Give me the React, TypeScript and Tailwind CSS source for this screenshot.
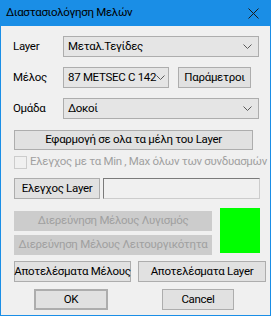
import { ReactNode } from 'react';

const font = { fontFamily: '"Segoe UI", Roboto, "Liberation Sans", sans-serif' };

function Chevron() {
  return (
    <svg width="9" height="5" viewBox="0 0 9 5" className="shrink-0">
      <path d="M0.5 0.5 L4.5 4.5 L8.5 0.5" fill="none" stroke="#5a5a5a" strokeWidth="1" />
    </svg>
  );
}

function Combo({ value, className }: { value: string; className: string }) {
  return (
    <div
      className={`flex h-[21px] items-center justify-between border border-[#adadad] bg-[#e5e5e5] pl-[4px] pr-[6px] text-black ${className}`}
    >
      <span className="whitespace-nowrap">{value}</span>
      <Chevron />
    </div>
  );
}

function Btn({
  children,
  className,
  disabled,
}: {
  children: ReactNode;
  className: string;
  disabled?: boolean;
}) {
  return (
    <div
      className={`flex shrink-0 items-center justify-center whitespace-nowrap border ${
        disabled
          ? 'border-[#cccccc] bg-[#cccccc] text-[#a0a0a0]'
          : 'border-[#adadad] bg-[#e1e1e1] text-black'
      } ${className}`}
    >
      {children}
    </div>
  );
}

export default function App() {
  return (
    <div
      style={font}
      className="flex h-[316px] w-[271px] flex-col overflow-hidden border border-t-0 border-[#1a8ee6] bg-[#f0f0f0] text-[11.5px] tracking-[-0.3px]"
    >
      <div className="flex h-[26px] shrink-0 items-center justify-between bg-[#1a8ee6] pl-[5px] pr-[11px]">
        <span className="text-black">Διαστασιολόγηση Μελών</span>
        <svg width="11" height="11" viewBox="0 0 11 11">
          <path d="M0.5 0.5 L10.5 10.5 M10.5 0.5 L0.5 10.5" stroke="#1a1a1a" strokeWidth="1" />
        </svg>
      </div>

      <div className="flex flex-col pl-[12px] pr-[11px] pt-[10px]">
        <div className="flex h-[21px] items-center">
          <span className="w-[50px]">Layer</span>
          <Combo value="Μεταλ.Τεγίδες" className="w-[196px]" />
        </div>
        <div className="mt-[10px] flex h-[21px] items-center">
          <span className="w-[50px]">Μέλος</span>
          <Combo value="87 METSEC C 142" className="w-[106px]" />
          <Btn className="ml-[9px] h-[21px] w-[73px]">Παράμετροι</Btn>
        </div>
        <div className="mt-[10px] flex h-[21px] items-center">
          <span className="w-[50px]">Ομάδα</span>
          <Combo value="Δοκοί" className="w-[196px]" />
        </div>

        <Btn className="ml-[1px] mt-[11px] h-[20px] w-[239px]">Εφαρμογή σε ολα τα μέλη του Layer</Btn>

        <div className="mt-[4px] flex h-[16px] items-center">
          <div className="ml-[1px] h-[13px] w-[13px] shrink-0 border border-[#cccccc] bg-[#f0f0f0]" />
          <span className="ml-[3px] whitespace-nowrap text-[#a0a0a0]">
            Ελεγχος με τα Min , Max όλων των συνδυασμών
          </span>
        </div>

        <div className="mt-[8px] flex h-[21px] items-stretch">
          <Btn className="ml-[1px] w-[86px]">Ελεγχος Layer</Btn>
          <div className="ml-[3px] w-[157px] shrink-0 border border-[#cccccc] border-l-[#7a7a7a] border-t-[#7a7a7a] bg-[#f0f0f0]" />
        </div>

        <div className="mt-[9px] flex items-start">
          <div className="ml-[1px] flex flex-col pt-[3px]">
            <Btn disabled className="h-[20px] w-[198px]">Διερεύνηση Μέλους Λυγισμός</Btn>
            <Btn disabled className="mt-[4px] h-[20px] w-[198px]">Διερεύνηση Μέλους Λειτουργικότητα</Btn>
          </div>
          <div className="ml-[8px] h-[45px] w-[40px] shrink-0 bg-[#00ff00]" />
        </div>

        <div className="mt-[6px] flex h-[21px] items-stretch">
          <Btn className="ml-[1px] w-[117px]">Αποτελέσματα Μέλους</Btn>
          <Btn className="ml-[7px] w-[128px]">Αποτελέσματα Layer</Btn>
        </div>

        <div className="mt-[7px] flex h-[21px] items-stretch">
          <Btn className="ml-[21px] w-[74px] border-2 border-[#0078d7]">OK</Btn>
          <Btn className="ml-[54px] w-[72px]">Cancel</Btn>
        </div>
      </div>
    </div>
  );
}
